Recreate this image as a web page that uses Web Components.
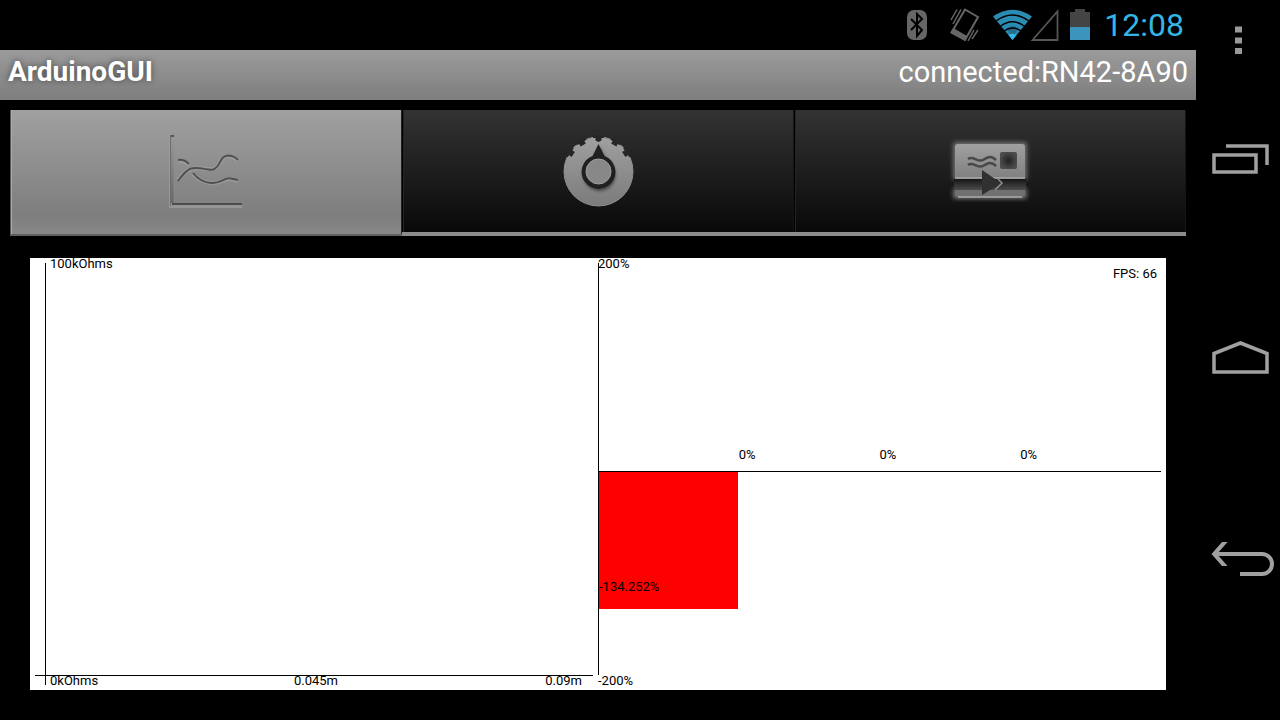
<!DOCTYPE html>
<html lang="en">
<head>
<meta charset="utf-8">
<meta name="viewport" content="width=device-width, initial-scale=1">
<title>ArduinoGUI</title>
<style>
  html, body { margin: 0; background: #000; }
  body { font-family: Roboto, "Noto Sans", sans-serif; color: #fff; }
</style>
</head>
<body>
<device-screen>
  <status-bar></status-bar>
  <title-bar heading="ArduinoGUI">connected:RN42-8A90</title-bar>
  <tab-strip></tab-strip>
  <sensor-chart fps="66"></sensor-chart>
  <nav-keys slot="nav"></nav-keys>
</device-screen>

<script>
const define = (name, html, setup) => customElements.define(name, class extends HTMLElement {
  constructor() {
    super();
    this.attachShadow({ mode: "open" }).innerHTML = html;
  }
  connectedCallback() { if (setup) setup(this, this.shadowRoot); }
});

define("device-screen", `
<style>
  :host { display: grid; grid-template-columns: minmax(0, 1fr) 84px; min-height: 100vh; background: #000; }
  main { display: flex; flex-direction: column; min-width: 0; }
</style>
<main><slot></slot></main>
<slot name="nav"></slot>`);

define("status-bar", `
<style>
  :host { display: flex; justify-content: flex-end; align-items: center; height: 50px; padding-right: 12px; color: #33b5e5; }
  svg { display: block; flex: none; }
  time { font-size: 32px; line-height: 52px; margin-left: 10px; }
</style>
<svg width="30" height="50" viewBox="902 0 30 50" role="img" aria-label="Bluetooth">
  <rect x="907" y="10" width="20" height="30" rx="7" fill="#666"/>
  <path d="M911 19L922 30L917 36V14L922 19L911 30" fill="none" stroke="#000" stroke-width="2"/>
</svg>
<svg width="58" height="50" viewBox="932 0 58 50" role="img" aria-label="Vibrate">
  <g fill="none" stroke="#666" stroke-width="1.5">
    <path d="M965 9.500L978 17L965 40L951.500 32.500Z" stroke-width="2"/>
    <path d="M951.500 32L965 40L966.500 36.500L953.500 29Z" fill="#666"/>
    <path d="M957 9.500L951 20M961 9.500L953 24M974 30L968 41M978 30L972 39"/>
  </g>
</svg>
<svg width="40" height="50" viewBox="990 0 40 50" overflow="visible" role="img" aria-label="Wi-Fi">
  <path d="M1012.500 40L993 16.500Q1012.500 3 1032 16.500Z" fill="#2b8cb3"/>
  <path d="M1007 28L1012.500 39L1018 28Q1012.500 24 1007 28Z" fill="#276c88"/>
  <g fill="none" stroke="#000" stroke-width="1.500">
    <path d="M996 21Q1012.500 9 1029 21"/><path d="M1000 26.500Q1012.500 17 1025 26.500"/><path d="M1004 31Q1012.500 25 1021 31"/>
  </g>
  <path d="M1012.500 40L1008.500 35Q1012.500 32.500 1016.500 35Z" fill="#33b5e5"/>
</svg>
<svg width="34" height="50" viewBox="1030 0 34 50" role="img" aria-label="No signal">
  <path d="M1032.500 40H1057.500V11.500Z" fill="none" stroke="#555" stroke-width="1.800"/>
</svg>
<svg width="30" height="50" viewBox="1064 0 30 50" role="img" aria-label="Battery">
  <path d="M1075 9H1085V12H1090V28H1070V12H1075Z" fill="#444"/>
  <path d="M1070 27H1090V40H1070Z" fill="#3b94bb"/>
</svg>
<time datetime="12:08">12:08</time>`);

define("title-bar", `
<style>
  :host { display: flex; justify-content: space-between; height: 50px; padding: 0 8px;
    background: linear-gradient(#9b9b9b, #7e7e7e); line-height: 44px; font-size: 29px; }
  h1 { margin: 0; font-size: 28px; font-weight: 700; text-shadow: 0 0 6px #444; }
</style>
<h1></h1><span><slot></slot></span>`, (host, root) => {
  root.querySelector("h1").textContent = host.getAttribute("heading");
});

define("tab-strip", `
<style>
  :host { display: block; margin: 10px 10px 0; }
  div { display: grid; grid-template-columns: repeat(3, 1fr); }
  button { appearance: none; border: 0; margin: 0; padding: 0; height: 126px; display: grid; place-items: center; cursor: pointer;
    background: linear-gradient(#333, #222 40%, #090909);
    border-bottom: 4px solid #8c8c8c; box-shadow: inset 1px 0 #000, inset 2px 0 #242424, inset -1px 0 #151515; }
  button[aria-selected="true"] { background: linear-gradient(#a0a0a0, #7e7e7e 85%, #888); border-bottom: 2px solid #606060; box-shadow: inset 1px 0 #555, inset 2px 0 #aaa, inset -1px 0 #222; }
  svg { display: block; }
</style>
<div role="tablist">
  <button type="button" role="tab" aria-selected="true" aria-label="Graph">
    <svg width="110" height="100" viewBox="151 121 110 100" fill="none">
      <defs><linearGradient id="ax" x1="0" x2="0" y1="0" y2="1"><stop offset="0" stop-color="#999"/><stop offset="1" stop-color="#686868"/></linearGradient></defs>
      <g stroke="#a5a5a5" stroke-width="4" opacity=".6">
        <path d="M171 134V205H242M178 160Q184 159 189 164M178 179Q186 169 191 168C200 166 207 169 213 168C221 166 219 155 228 155Q234 155 238 160M193 173Q200 181 211 182C221 183 224 177 231 178L238 180"/>
      </g>
      <path d="M170.500 134H173.500V202H170.500Z" fill="url(#ax)"/>
      <path d="M170 135H174" stroke="#555" stroke-width="2"/>
      <path d="M170.500 134V205" stroke="#6c6c6c"/>
      <path d="M172 203H242" stroke="#4c4c4c" stroke-width="2"/>
      <path d="M178 159Q184 158 189 163M178 180Q186 169 191 167.500C200 165 207 170 213 168.500C221 166 219 155 228 154.500Q234 154.500 238 159M193 172Q200 181 211 182C221 183 224 176 231 177.500L238 179" stroke="#505050" stroke-width="2"/>
    </svg>
  </button>
  <button type="button" role="tab" aria-selected="false" aria-label="Control">
    <svg width="120" height="100" viewBox="538 121 120 100">
      <defs>
        <linearGradient id="kn" x1="0" x2="0" y1="0" y2="1"><stop offset="0" stop-color="#a0a0a0"/><stop offset="1" stop-color="#7b7b7b"/></linearGradient>
        <filter id="soft" x="-20%" y="-20%" width="140%" height="140%"><feGaussianBlur stdDeviation="1.500"/></filter>
      </defs>
      <circle cx="598.500" cy="171.500" r="34.500" fill="url(#kn)" stroke="#8f8f8f"/>
      <g fill="#262626">
        <path id="notch" d="M595.500 135.500H601.500V140.500L598.500 142L595.500 140.500Z"/>
        <path d="M593 135.500H604V138H593Z"/>
        <g transform="rotate(-30 598.500 171.500)"><path d="M595.500 135.500H601.500V141H595.500ZM593 135.500H604V138H593Z"/></g>
        <g transform="rotate(30 598.500 171.500)"><path d="M595.500 135.500H601.500V141H595.500ZM593 135.500H604V138H593Z"/></g>
        <g transform="rotate(-56 598.500 171.500)"><path d="M595.500 135.500H601.500V141H595.500ZM593 135.500H604V138H593Z"/></g>
        <g transform="rotate(56 598.500 171.500)"><path d="M595.500 135.500H601.500V141H595.500ZM593 135.500H604V138H593Z"/></g>
      </g>
      <path d="M599 146L606 160A16 16 0 1 1 591 160Z" fill="#333" opacity=".7" filter="url(#soft)" transform="translate(1 1)"/>
      <path d="M598.500 144L604.500 156A17 17 0 1 1 592.500 156Z" fill="#202020"/>
      <circle cx="598.500" cy="171.500" r="12.500" fill="#888" stroke="#a0a0a0"/>
    </svg>
  </button>
  <button type="button" role="tab" aria-selected="false" aria-label="Send">
    <svg width="120" height="100" viewBox="930 121 120 100">
      <defs>
        <linearGradient id="cd" x1="0" x2="0" y1="0" y2="1"><stop offset="0" stop-color="#a0a0a0"/><stop offset="1" stop-color="#808080"/></linearGradient>
        <linearGradient id="band" x1="0" x2="0" y1="0" y2="1"><stop offset="0" stop-color="#161616"/><stop offset=".45" stop-color="#333"/><stop offset="1" stop-color="#555"/></linearGradient>
        <radialGradient id="st"><stop offset="0" stop-color="#222"/><stop offset="1" stop-color="#4c4c4c"/></radialGradient>
        <filter id="glow" x="-20%" y="-20%" width="140%" height="140%"><feGaussianBlur stdDeviation="2"/></filter>
      </defs>
      <rect x="953" y="142" width="74" height="38" rx="3" fill="#707070" filter="url(#glow)"/>
      <rect x="953" y="188" width="74" height="11" rx="3" fill="#707070" filter="url(#glow)"/>
      <path d="M955 147Q955 144 958 144H1022Q1025 144 1025 147V178H955Z" fill="url(#cd)"/>
      <path d="M954 179H1026V192H954Z" fill="url(#band)"/>
      <path d="M955 190H1025V194Q1025 197 1022 197H958Q955 197 955 194Z" fill="#707070"/>
      <path d="M955 178H1025M958 197H1022" stroke="#aaa" stroke-width="1.500"/>
      <path d="M968 159C973 155 978 163 983 160S991 155 996 160M968 165C973 161 978 169 983 166S991 161 996 166" fill="none" stroke="#484848" stroke-width="2.500"/>
      <rect x="1000" y="152" width="17" height="17" rx="2" fill="url(#st)"/>
      <path d="M982 170L1001 183L982 195Z" fill="#303030"/>
      <path d="M997 178L1002 183L995 190" fill="none" stroke="#909090" stroke-width="1.500"/>
    </svg>
  </button>
</div>`);

define("sensor-chart", `
<style>
  :host { display: grid; grid-template-columns: 1fr 1fr; flex: 1; position: relative; margin: 22px 30px 30px;
    padding: 0 5px; background: #fff; color: #000; font-size: 13px; line-height: 12px; }
  .trace { display: grid; grid-template: minmax(0, 1fr) 15px / minmax(0, 1fr); }
  .trace .axis { grid-area: 1 / 1 / 3 / 2; width: 1px; margin: 5px 0 5px 10px; background: #000; }
  .trace .max { grid-area: 1 / 1; padding-left: 15px; }
  .trace .scale { grid-area: 2 / 1; display: grid; grid-template-columns: 1fr auto 1fr; margin-right: 5px;
    padding: 0 11px 0 15px; border-top: 1px solid #000; line-height: 10px; }
  .scale :last-child { text-align: right; }
  .levels { display: grid; grid-template: minmax(0, 213fr) minmax(0, 219fr) / minmax(0, 1fr); }
  .levels .axis { grid-area: 1 / 1 / 3 / 2; width: 1px; margin: 5px 0 15px; background: #000; }
  .above { grid-area: 1 / 1; display: flex; flex-direction: column; justify-content: space-between; }
  .below { grid-area: 2 / 1; display: flex; flex-direction: column; border-top: 1px solid #000; }
  .cols { display: grid; grid-template-columns: repeat(4, 1fr); }
  .above .cols { padding-bottom: 10px; }
  .below .cols { flex: 1; }
  .bar { height: 67.5%; margin: 0 1px; background: #f00; display: flex; align-items: flex-end; }
  .bar span { padding-bottom: 16px; }
  .min { line-height: 12px; height: 15px; }
  output { position: absolute; top: 10px; right: 9px; }
</style>
<div class="trace">
  <div class="axis"></div>
  <span class="max">100kOhms</span>
  <div class="scale"><span>0kOhms</span><span>0.045m</span><span>0.09m</span></div>
</div>
<div class="levels">
  <div class="above">
    <span>200%</span>
    <div class="cols"><span></span><span>0%</span><span>0%</span><span>0%</span></div>
  </div>
  <div class="below">
    <div class="cols"><div class="bar"><span>-134.252%</span></div></div>
    <span class="min">-200%</span>
  </div>
  <div class="axis"></div>
</div>
<output></output>`, (host, root) => {
  root.querySelector("output").textContent = "FPS: " + host.getAttribute("fps");
});

define("nav-keys", `
<style>
  :host { display: grid; grid-template-rows: 60px repeat(3, 1fr) 60px; background: #000; }
  button { appearance: none; border: 0; padding: 0; margin: 0; background: none; display: grid; place-items: center; cursor: pointer; }
  svg { display: block; fill: none; stroke: #a0a0a0; stroke-width: 4; }
</style>
<button type="button" aria-label="Menu"><svg width="84" height="60" viewBox="1196 0 84 60"><path d="M1235 26.500H1242V32.500H1235ZM1235 37.500H1242V43.500H1235ZM1235 48H1242V54H1235Z" fill="#999" stroke="none"/></svg></button>
<button type="button" aria-label="Recent apps"><svg width="84" height="60" viewBox="1196 130 84 60"><path d="M1226 146H1267V165M1214 155H1256V172H1214Z" stroke-width="3.500"/></svg></button>
<button type="button" aria-label="Home"><svg width="84" height="60" viewBox="1196 330 84 60"><path d="M1214 372V353.500L1240.500 343L1267 353.500V372Z" stroke-width="3.500"/></svg></button>
<button type="button" aria-label="Back"><svg width="84" height="60" viewBox="1196 530 84 60"><path d="M1216 554H1262A10 10 0 0 1 1262 574H1240"/><path d="M1222 542H1227.500L1217 554L1227.500 566H1222L1211.500 554Z" fill="#a0a0a0" stroke="none"/></svg></button>`);
</script>
</body>
</html>
